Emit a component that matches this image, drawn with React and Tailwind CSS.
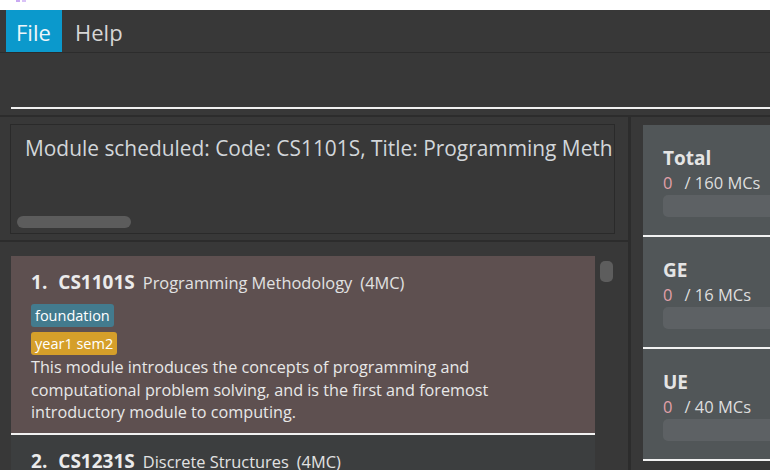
import React from "react";

const font = { fontFamily: '"Open Sans", "Noto Sans", sans-serif' };

function ModuleCard({ index, code, title, mc, tags, desc, selected }) {
  return (
    <div
      className={`border-b-2 border-[#f2f2f2] pl-[20px] pr-[10px] pt-[14px] pb-[9px] ${
        selected ? "bg-[#5e5050]" : "bg-[#3c3e3f]"
      }`}
    >
      <div className="flex items-baseline leading-[24px] whitespace-nowrap">
        <span className="text-[19px] font-bold text-[#ebebeb]">{index}.</span>
        <span className="ml-[11px] text-[19px] font-bold text-[#ebebeb]">{code}</span>
        <span className="ml-[8px] text-[16.4px] text-[#e2e2e2]">{title}</span>
        <span className="ml-[8px] text-[16.4px] text-[#e2e2e2]">({mc}MC)</span>
      </div>
      {tags && (
        <div className="mt-[9px] flex flex-col items-start gap-[5px]">
          {tags.map((t) => (
            <span
              key={t.label}
              className={`h-[23px] rounded-[3px] px-[4px] text-[14.5px] leading-[23px] text-white ${t.cls}`}
            >
              {t.label}
            </span>
          ))}
        </div>
      )}
      {desc && (
        <p className="mt-[1px] w-[480px] text-[16.2px] leading-[22.5px] text-[#e8e8e8]">{desc}</p>
      )}
    </div>
  );
}

function CreditCard({ name, total }) {
  return (
    <div className="h-[112px] border-b-2 border-[#f2f2f2] bg-[#515658] pl-[20px] pt-[20px]">
      <div className="text-[19px] font-bold leading-[26px] text-[#e4e4e4]">{name}</div>
      <div className="flex items-baseline text-[16.5px] leading-[24px] text-[#dedede]">
        <span className="text-[#e0a0a8]">0</span>
        <span className="ml-[12px]">/ {total} MCs</span>
      </div>
      <div className="h-[22px] w-[200px] rounded-[5px] bg-[#5d6164]" />
    </div>
  );
}

export default function App() {
  return (
    <div className="h-[471px] w-[770px] overflow-hidden bg-white" style={font}>
      {/* top white strip */}
      <div className="flex h-[10px] items-start gap-[2px] pl-[16px]">
        <div className="h-[2px] w-[4px] bg-[#c9a9f2]" />
        <div className="h-[2px] w-[4px] bg-[#d9c2f7]" />
      </div>

      {/* menu bar */}
      <div className="flex h-[43px] items-stretch border-b border-[#2c2c2c] bg-[#383838] pl-[6px]">
        <div className="flex w-[56px] items-center bg-[#0b99cc] pl-[10px] pt-[2px] text-[22px] text-[#eef6fa]">
          File
        </div>
        <div className="flex items-center pl-[13px] pt-[2px] text-[22px] text-[#d6d6d6]">Help</div>
      </div>

      {/* command box */}
      <div className="h-[62px] bg-[#383838] pl-[11px] pt-[54px]">
        <div className="h-[2px] bg-[#f0f0f0]" />
      </div>
      <div className="h-[2px] bg-[#2c2c2c]" />

      {/* main */}
      <div className="flex h-[353px] bg-[#383838]">
        {/* left column */}
        <div className="flex w-[628px] flex-col">
          <div className="h-[123px] pb-[6px] pl-[10px] pr-[13px] pt-[7px]">
            <div className="flex h-[110px] flex-col justify-between overflow-hidden border border-[#2a2a2a] bg-[#383838]">
              <div className="overflow-hidden whitespace-nowrap pl-[14px] pt-[10px] text-[20.9px] leading-[27px] text-[#d2d6da]">
                Module scheduled: Code: CS1101S, Title: Programming Meth
              </div>
              <div className="mb-[5px] ml-[6px] h-[12px] w-[114px] rounded-full bg-[#5c5c5c]" />
            </div>
          </div>
          <div className="h-[2px] bg-[#2c2c2c]" />
          <div className="flex flex-1 overflow-hidden pl-[11px] pt-[14px]">
            <div className="w-[584px]">
              <ModuleCard
                selected
                index={1}
                code="CS1101S"
                title="Programming Methodology"
                mc={4}
                tags={[
                  { label: "foundation", cls: "bg-[#437b8e]" },
                  { label: "year1 sem2", cls: "bg-[#d59f2a]" },
                ]}
                desc="This module introduces the concepts of programming and computational problem solving, and is the first and foremost introductory module to computing."
              />
              <ModuleCard index={2} code="CS1231S" title="Discrete Structures" mc={4} />
            </div>
            <div className="ml-[5px] mt-[5px] h-[21px] w-[13px] rounded-[5px] bg-[#5d5d5d]" />
          </div>
        </div>

        {/* divider */}
        <div className="w-[3px] bg-[#2c2c2c]" />

        {/* right column */}
        <div className="flex-1 overflow-hidden pl-[12px] pt-[8px]">
          <CreditCard name="Total" total={160} />
          <CreditCard name="GE" total={16} />
          <CreditCard name="UE" total={40} />
        </div>
      </div>
    </div>
  );
}
